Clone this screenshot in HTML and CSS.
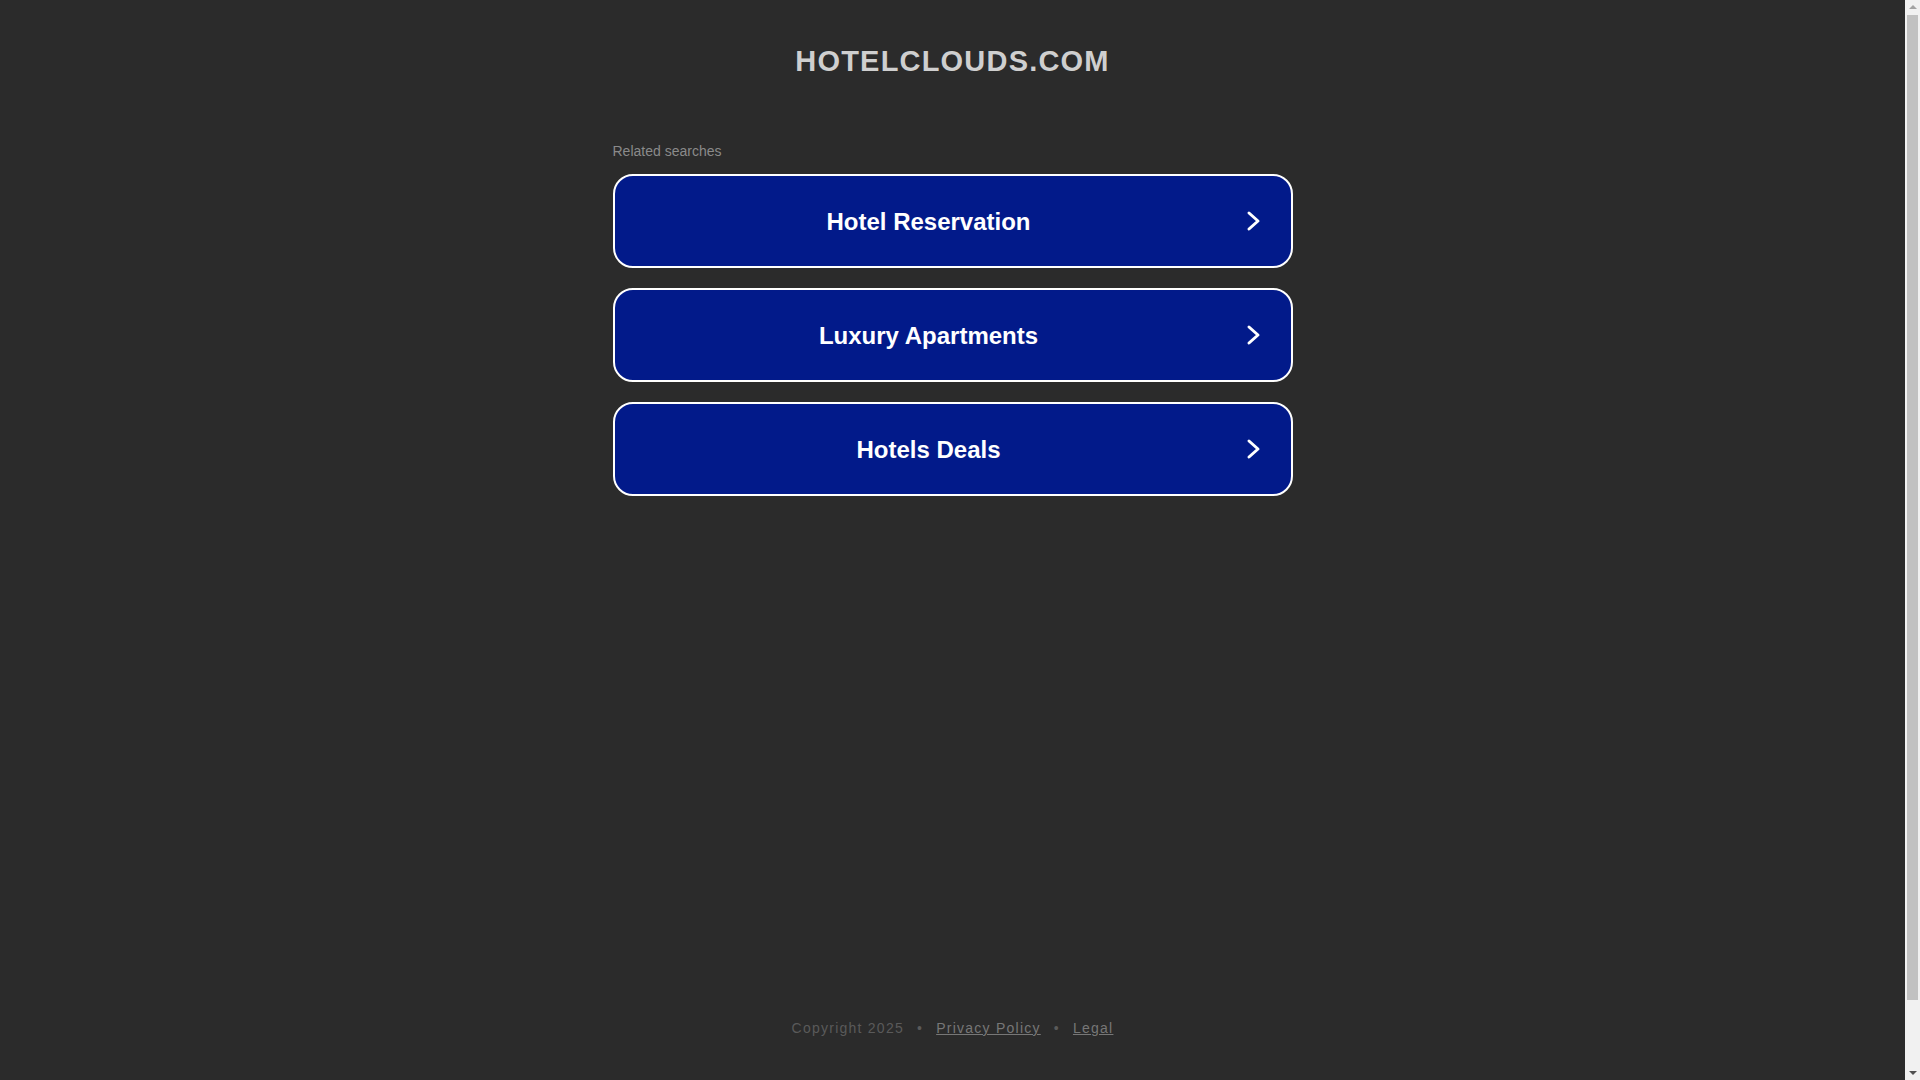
FILE: index.html
```html
<!DOCTYPE html>
<html lang="en">
<head>
<meta charset="utf-8">
<title>hotelclouds.com</title>
<link rel="stylesheet" href="styles.css">
</head>
<body>
<div class="page">
  <h1 class="domain">HOTELCLOUDS.COM</h1>
  <main class="container">
    <div class="related">Related searches</div>
    <a class="search" href="#">
      <span class="search-label">Hotel Reservation</span>
      <svg class="chevron" viewBox="0 0 22 22" width="22" height="22"><polyline points="6,3 15,11 6,19" /></svg>
    </a>
    <a class="search" href="#">
      <span class="search-label">Luxury Apartments</span>
      <svg class="chevron" viewBox="0 0 22 22" width="22" height="22"><polyline points="6,3 15,11 6,19" /></svg>
    </a>
    <a class="search" href="#">
      <span class="search-label">Hotels Deals</span>
      <svg class="chevron" viewBox="0 0 22 22" width="22" height="22"><polyline points="6,3 15,11 6,19" /></svg>
    </a>
  </main>
  <footer class="footer">
    <span class="copy">Copyright 2025</span><span class="dot">•</span><a class="flink" href="#">Privacy Policy</a><span class="dot">•</span><a class="flink" href="#">Legal</a>
  </footer>
</div>
<div class="scrollbar" aria-hidden="true">
  <div class="sb-up"></div>
  <div class="sb-thumb"></div>
  <div class="sb-down"></div>
</div>
</body>
</html>
```
FILE: styles.css
```css
html, body {
  margin: 0;
  padding: 0;
  background: #2b2b2b;
  overflow: hidden;
}
body {
  font-family: "Liberation Sans", Arial, sans-serif;
  padding-right: 15px;
}
.page {
  display: flex;
  flex-direction: column;
  min-height: 1110px;
  box-sizing: border-box;
  padding: 45px 0 74px;
}
.domain {
  margin: 0;
  text-align: center;
  font-size: 29px;
  line-height: 33px;
  font-weight: bold;
  letter-spacing: 1.2px;
  color: #cfcfcf;
}
.container {
  width: 680px;
  margin: 65px auto 0;
}
.related {
  font-size: 14px;
  line-height: 16px;
  color: #8a8a8a;
  margin-bottom: 15px;
}
.search {
  display: flex;
  align-items: center;
  height: 94px;
  box-sizing: border-box;
  border: 2px solid #ffffff;
  border-radius: 20px;
  background: #021a8a;
  margin-bottom: 20px;
  text-decoration: none;
}
.search-label {
  flex: 1;
  text-align: center;
  color: #ffffff;
  font-size: 24px;
  line-height: 28px;
  padding-top: 2px;
  font-weight: bold;
}
.chevron {
  margin-right: 26px;
  flex: none;
}
.chevron polyline {
  fill: none;
  stroke: #ffffff;
  stroke-width: 3;
  stroke-linecap: round;
  stroke-linejoin: round;
}
.footer {
  margin-top: auto;
  text-align: center;
  font-size: 14px;
  line-height: 16px;
  letter-spacing: 1.25px;
}
.copy {
  color: #5a5a5a;
}
.dot {
  color: #5a5a5a;
  padding: 0 13px;
}
.flink {
  color: #777777;
  text-decoration: underline;
}
.scrollbar {
  position: fixed;
  top: 0;
  right: 0;
  width: 15px;
  height: 100vh;
  background: #f1f1f1;
  display: flex;
  flex-direction: column;
  align-items: center;
}
.sb-up {
  margin-top: 5px;
  width: 0;
  height: 0;
  border-left: 4px solid transparent;
  border-right: 4px solid transparent;
  border-bottom: 4px solid #a3a3a3;
}
.sb-thumb {
  margin-top: 6px;
  width: 11px;
  height: 985px;
  background: #c1c1c1;
}
.sb-down {
  margin-top: auto;
  margin-bottom: 5px;
  width: 0;
  height: 0;
  border-left: 4px solid transparent;
  border-right: 4px solid transparent;
  border-top: 4px solid #505050;
}
```
